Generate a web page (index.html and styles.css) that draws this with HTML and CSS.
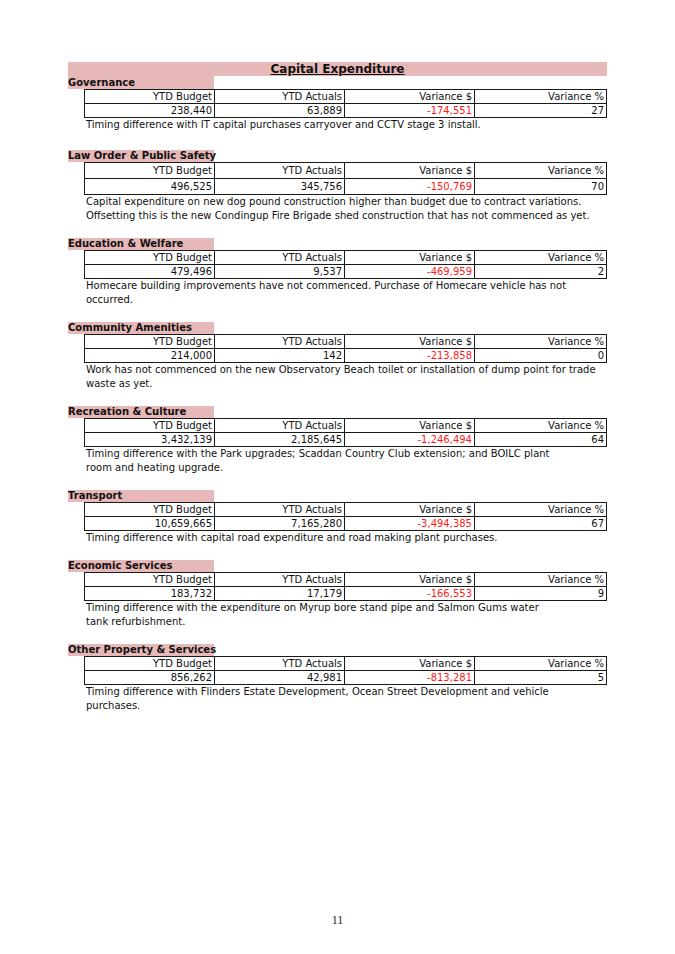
FILE: index.html
```html
<!DOCTYPE html>
<html>
<head>
<meta charset="utf-8">
<link rel="stylesheet" href="styles.css">
</head>
<body>
<div class="page">
  <div class="title-band"><span class="title">Capital Expenditure</span></div>

  <section class="sec sec-first">
    <div class="label">Governance</div>
    <table class="fig">
      <tr><td>YTD Budget</td><td>YTD Actuals</td><td>Variance $</td><td>Variance %</td></tr>
      <tr><td>238,440</td><td>63,889</td><td class="neg">-174,551</td><td>27</td></tr>
    </table>
    <p class="note">Timing difference with IT capital purchases carryover and CCTV stage 3 install.</p>
  </section>

  <section class="sec">
    <div class="label">Law Order &amp; Public Safety</div>
    <table class="fig tall">
      <tr><td>YTD Budget</td><td>YTD Actuals</td><td>Variance $</td><td>Variance %</td></tr>
      <tr><td>496,525</td><td>345,756</td><td class="neg">-150,769</td><td>70</td></tr>
    </table>
    <p class="note">Capital expenditure on new dog pound construction higher than budget due to contract variations.<br>Offsetting this is the new Condingup Fire Brigade shed construction that has not commenced as yet.</p>
  </section>

  <section class="sec">
    <div class="label">Education &amp; Welfare</div>
    <table class="fig">
      <tr><td>YTD Budget</td><td>YTD Actuals</td><td>Variance $</td><td>Variance %</td></tr>
      <tr><td>479,496</td><td>9,537</td><td class="neg">-469,959</td><td>2</td></tr>
    </table>
    <p class="note">Homecare building improvements have not commenced. Purchase of Homecare vehicle has not<br>occurred.</p>
  </section>

  <section class="sec">
    <div class="label">Community Amenities</div>
    <table class="fig">
      <tr><td>YTD Budget</td><td>YTD Actuals</td><td>Variance $</td><td>Variance %</td></tr>
      <tr><td>214,000</td><td>142</td><td class="neg">-213,858</td><td>0</td></tr>
    </table>
    <p class="note">Work has not commenced on the new Observatory Beach toilet or installation of dump point for trade<br>waste as yet.</p>
  </section>

  <section class="sec">
    <div class="label">Recreation &amp; Culture</div>
    <table class="fig">
      <tr><td>YTD Budget</td><td>YTD Actuals</td><td>Variance $</td><td>Variance %</td></tr>
      <tr><td>3,432,139</td><td>2,185,645</td><td class="neg">-1,246,494</td><td>64</td></tr>
    </table>
    <p class="note">Timing difference with the Park upgrades; Scaddan Country Club extension; and BOILC plant<br>room and heating upgrade.</p>
  </section>

  <section class="sec">
    <div class="label">Transport</div>
    <table class="fig">
      <tr><td>YTD Budget</td><td>YTD Actuals</td><td>Variance $</td><td>Variance %</td></tr>
      <tr><td>10,659,665</td><td>7,165,280</td><td class="neg">-3,494,385</td><td>67</td></tr>
    </table>
    <p class="note">Timing difference with capital road expenditure and road making plant purchases.</p>
  </section>

  <section class="sec">
    <div class="label">Economic Services</div>
    <table class="fig">
      <tr><td>YTD Budget</td><td>YTD Actuals</td><td>Variance $</td><td>Variance %</td></tr>
      <tr><td>183,732</td><td>17,179</td><td class="neg">-166,553</td><td>9</td></tr>
    </table>
    <p class="note">Timing difference with the expenditure on Myrup bore stand pipe and Salmon Gums water<br>tank refurbishment.</p>
  </section>

  <section class="sec">
    <div class="label">Other Property &amp; Services</div>
    <table class="fig">
      <tr><td>YTD Budget</td><td>YTD Actuals</td><td>Variance $</td><td>Variance %</td></tr>
      <tr><td>856,262</td><td>42,981</td><td class="neg">-813,281</td><td>5</td></tr>
    </table>
    <p class="note">Timing difference with Flinders Estate Development, Ocean Street Development and vehicle<br>purchases.</p>
  </section>

  <div class="page-no">11</div>
</div>
</body>
</html>
```

FILE: styles.css
```css
html, body {
  margin: 0;
  padding: 0;
  background: #ffffff;
}

.page {
  width: 675px;
  height: 954px;
  box-sizing: border-box;
  padding: 62px 0 0 68px;
  font-family: "DejaVu Sans", sans-serif;
  font-size: 10px;
  color: #111;
  position: relative;
}

.title-band {
  width: 539px;
  height: 14px;
  background: #e6b8b7;
  text-align: center;
  line-height: 14px;
}

.title {
  font-size: 12px;
  font-weight: bold;
  text-decoration: underline;
}

.sec {
  margin-bottom: 15px;
}

.sec-first {
  margin-bottom: 18px;
}

.label {
  width: 146px;
  height: 12px;
  line-height: 12px;
  background: #e6b8b7;
  font-weight: bold;
  white-space: nowrap;
}

.sec-first .label {
  height: 13px;
  line-height: 13px;
}

.fig {
  margin-left: 16px;
  width: 523px;
  border-collapse: collapse;
  table-layout: fixed;
}

.fig td {
  border: 1px solid #1a1a1a;
  height: 13px;
  line-height: 13px;
  padding: 0 2px 0 0;
  text-align: right;
  white-space: nowrap;
}

.fig td:nth-child(1),
.fig td:nth-child(2),
.fig td:nth-child(3) {
  width: 127px;
}

.fig.tall td {
  height: 15px;
  line-height: 15px;
}

.neg {
  color: #ff1a1a;
}

.note {
  margin: 0;
  padding-left: 18px;
  line-height: 14px;
}

.page-no {
  position: absolute;
  left: 0;
  right: 0;
  top: 913px;
  text-align: center;
  font-family: "Liberation Serif", serif;
  font-size: 12px;
  color: #222;
}
```
